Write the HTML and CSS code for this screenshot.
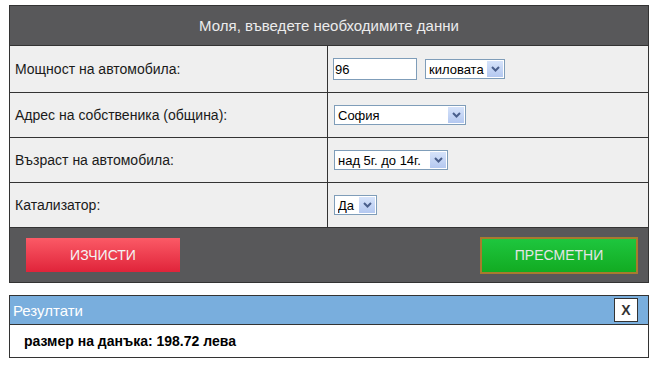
FILE: index.html
```html
<!DOCTYPE html>
<html lang="bg">
<head>
    <meta charset="UTF-8">
    <title>Данък МПС</title>
    <link rel="stylesheet" href="styles.css">
</head>
<body>
    <div class="calc">
        <div class="calc-head">Моля, въведете необходимите данни</div>

        <div class="row first">
            <div class="label">Мощност на автомобила:</div>
            <div class="field">
                <input type="text" class="text-in" value="96">
                <span class="sel w-unit">
                    <select><option>киловата</option><option>конски сили</option></select>
                    <span class="arrow"><svg width="9" height="6" viewBox="0 0 9 6"><path d="M1 1l3.5 3.5L8 1" fill="none" stroke="#4a5f8c" stroke-width="2"/></svg></span>
                </span>
            </div>
        </div>
        <div class="row">
            <div class="label">Адрес на собственика (община):</div>
            <div class="field">
                <span class="sel w-city">
                    <select><option>София</option></select>
                    <span class="arrow"><svg width="9" height="6" viewBox="0 0 9 6"><path d="M1 1l3.5 3.5L8 1" fill="none" stroke="#4a5f8c" stroke-width="2"/></svg></span>
                </span>
            </div>
        </div>
        <div class="row">
            <div class="label">Възраст на автомобила:</div>
            <div class="field">
                <span class="sel w-age">
                    <select><option>над 5г. до 14г.</option></select>
                    <span class="arrow"><svg width="9" height="6" viewBox="0 0 9 6"><path d="M1 1l3.5 3.5L8 1" fill="none" stroke="#4a5f8c" stroke-width="2"/></svg></span>
                </span>
            </div>
        </div>
        <div class="row">
            <div class="label">Катализатор:</div>
            <div class="field">
                <span class="sel w-cat">
                    <select><option>Да</option><option>Не</option></select>
                    <span class="arrow"><svg width="9" height="6" viewBox="0 0 9 6"><path d="M1 1l3.5 3.5L8 1" fill="none" stroke="#4a5f8c" stroke-width="2"/></svg></span>
                </span>
            </div>
        </div>

        <div class="actions">
            <button class="btn btn-clear">ИЗЧИСТИ</button>
            <button class="btn btn-calc">ПРЕСМЕТНИ</button>
        </div>
    </div>

    <div class="results">
        <div class="results-head">
            <span>Резултати</span>
            <button class="close">X</button>
        </div>
        <div class="results-body">размер на данъка: 198.72 лева</div>
    </div>
</body>
</html>
```

FILE: styles.css
```css
body {
    margin: 0;
    padding: 5px 0 0 9px;
    font-family: 'Liberation Sans', Arial, sans-serif;
    font-size: 13px;
    color: #111;
    background: #fff;
}
.calc {
    width: 638px;
    border: 1px solid #333;
    background: #58585a;
}
.calc-head {
    height: 39px;
    line-height: 39px;
    text-align: center;
    color: #ececec;
    font-size: 15px;
    border-bottom: 1px solid #333;
}
.row {
    display: flex;
    height: 44px;
    background: #efefef;
    border-bottom: 1px solid #333;
}
.row.first {
    height: 46px;
}
.label {
    width: 312px;
    padding-left: 5px;
    display: flex;
    align-items: center;
    font-size: 14px;
    color: #1a1a1a;
    border-right: 1px solid #333;
}
.field {
    flex: 1;
    display: flex;
    align-items: center;
    padding-left: 6px;
    gap: 8px;
}
.text-in {
    width: 80px;
    height: 18px;
    margin: 0 0 0 -1px;
    padding: 1px 1px;
    border: 1px solid #7f9db9;
    font-family: inherit;
    font-size: 13px;
    color: #000;
}
.sel {
    position: relative;
    display: inline-flex;
    height: 18px;
    border: 1px solid #7f9db9;
    background: #fff;
}
.sel select {
    appearance: none;
    border: 0;
    background: transparent;
    padding: 0 18px 0 3px;
    width: 100%;
    font-family: inherit;
    font-size: 13px;
    color: #000;
    outline: none;
}
.arrow {
    position: absolute;
    right: 1px;
    top: 1px;
    width: 16px;
    height: 16px;
    background: linear-gradient(#d6e3fa, #b4c8f0);
    display: flex;
    align-items: center;
    justify-content: center;
    pointer-events: none;
}
.w-unit { width: 78px; }
.w-city { width: 130px; }
.w-age { width: 112px; }
.w-cat { width: 41px; }
.actions {
    height: 54px;
    display: flex;
    align-items: center;
    justify-content: space-between;
    padding: 0 10px 0 16px;
}
.btn {
    font-family: inherit;
    font-size: 14px;
    cursor: pointer;
}
.btn-clear {
    width: 154px;
    height: 34px;
    border: 0;
    color: #f4f4f4;
    background: linear-gradient(#fb5a66, #e0243a);
}
.btn-calc {
    width: 158px;
    height: 37px;
    border: 2px solid #a87a2e;
    color: #e6e6e6;
    background: linear-gradient(#1ec63e, #12ab22);
}
.results {
    width: 638px;
    margin-top: 12px;
    border: 1px solid #333;
}
.results-head {
    height: 28px;
    display: flex;
    align-items: center;
    justify-content: space-between;
    padding: 0 10px 0 3px;
    background: #79aedd;
    color: #fff;
    font-size: 15px;
    border-bottom: 1px solid #333;
}
.close {
    width: 24px;
    height: 24px;
    padding: 0;
    border: 1px solid #333;
    background: #fff;
    font-family: inherit;
    font-size: 14px;
    font-weight: bold;
    color: #333;
}
.results-body {
    height: 32px;
    line-height: 32px;
    padding-left: 14px;
    font-size: 14px;
    font-weight: bold;
    color: #000;
}
```
